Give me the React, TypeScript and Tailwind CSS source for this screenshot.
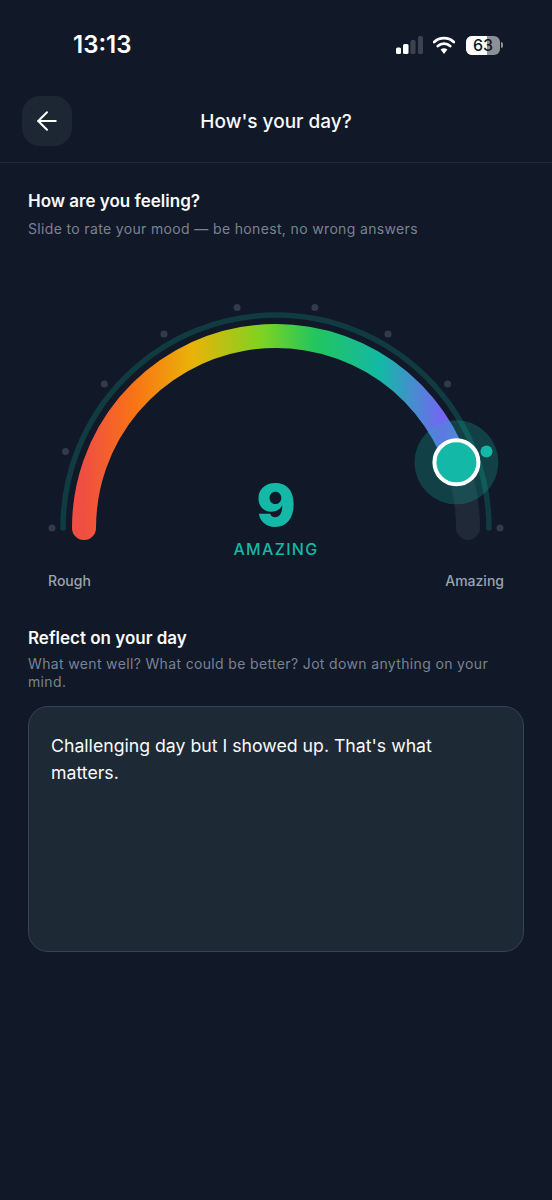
import React from "react";
import { ArrowLeft } from "lucide-react";

const CX = 276;
const CY = 240;
const R = 192;

function pt(r: number, deg: number) {
  const a = (deg * Math.PI) / 180;
  return [CX - r * Math.cos(a), CY - r * Math.sin(a)];
}

function arc(r: number, from: number, to: number) {
  const [x1, y1] = pt(r, from);
  const [x2, y2] = pt(r, to);
  return `M ${x1} ${y1} A ${r} ${r} 0 0 1 ${x2} ${y2}`;
}

const dots = [0, 20, 40, 60, 80, 100, 120, 140, 160, 180];

function Gauge() {
  const [tx, ty] = pt(R, 160);
  return (
    <svg width="552" height="270" viewBox="0 0 552 270" className="block">
      <defs>
        <linearGradient id="mood" gradientUnits="userSpaceOnUse" x1="84" y1="0" x2="470" y2="0">
          <stop offset="0" stopColor="#ef4f42" />
          <stop offset="0.13" stopColor="#f97316" />
          <stop offset="0.28" stopColor="#eab308" />
          <stop offset="0.46" stopColor="#7ed321" />
          <stop offset="0.6" stopColor="#22c55e" />
          <stop offset="0.77" stopColor="#14b8a6" />
          <stop offset="0.93" stopColor="#7565f6" />
          <stop offset="1" stopColor="#5a86e0" />
        </linearGradient>
      </defs>
      <path d={arc(213, 0, 180)} fill="none" stroke="#103c41" strokeWidth="5.5" strokeLinecap="round" />
      <path d={arc(R, 0, 180)} fill="none" stroke="#1f2937" strokeWidth="24" strokeLinecap="round" />
      {dots.map((d) => {
        const [x, y] = pt(224, d);
        return d === 160 ? null : <circle key={d} cx={x} cy={y} r="3.5" fill="#343b48" />;
      })}
      <path d={arc(R, 0, 160)} fill="none" stroke="url(#mood)" strokeWidth="24" strokeLinecap="round" />
      <circle cx={tx} cy={ty} r="42" fill="#14b8a6" fillOpacity="0.25" />
      <circle cx={pt(224, 160)[0]} cy={pt(224, 160)[1]} r="6" fill="#14b8a6" />
      <circle cx={tx} cy={ty} r="22" fill="#14b8a6" stroke="#ffffff" strokeWidth="4" />
    </svg>
  );
}

export default function App() {
  return (
    <div className="w-[552px] h-[1200px] bg-[#111827] text-white font-['Inter',sans-serif] overflow-hidden">
      <div className="h-[90px] flex items-start justify-between pt-[30px] pl-[73px] pr-[49px]">
        <span className="text-[24px] leading-[30px] font-semibold">13:13</span>
        <div className="flex items-center h-[30px]">
          <svg width="27" height="18" viewBox="0 0 27 18" className="mr-[10px]">
            <rect x="0" y="11.5" width="5" height="6.5" rx="1.5" fill="#fff" />
            <rect x="7" y="8" width="5.5" height="10" rx="1.5" fill="#fff" />
            <rect x="14.5" y="4" width="5" height="14" rx="1.5" fill="#3c4350" />
            <rect x="22" y="0" width="5" height="18" rx="1.5" fill="#3c4350" />
          </svg>
          <svg width="22" height="18" viewBox="0 0 22 18" className="mr-[11px]">
            <path d="M1.2 6 A14.5 14.5 0 0 1 20.8 6" fill="none" stroke="#fff" strokeWidth="2.8" strokeLinecap="round" />
            <path d="M4.8 10 A9.5 9.5 0 0 1 17.2 10" fill="none" stroke="#fff" strokeWidth="2.8" strokeLinecap="round" />
            <path d="M11 18 L7.6 13.6 A5.2 5.2 0 0 1 14.4 13.6 Z" fill="#fff" />
          </svg>
          <div className="relative w-[34px] h-[19px] rounded-[6px] overflow-hidden bg-[#8e9097] flex items-center justify-center">
            <div className="absolute left-0 top-0 bottom-0 w-[21px] bg-white" />
            <span className="relative text-[16px] leading-none font-medium text-[#111827]">63</span>
          </div>
          <div className="w-[2px] h-[6px] ml-[1px] rounded-r-sm bg-[#8e9097]" />
        </div>
      </div>
      <div className="h-[73px] border-b border-[#222a37] relative flex items-start justify-center">
        <button className="absolute left-[22px] top-[6px] w-[50px] h-[50px] rounded-[18px] bg-[#1c2733] flex items-center justify-center">
          <ArrowLeft size={30} strokeWidth={1.6} color="#fff" />
        </button>
        <h1 className="mt-[19px] text-[19px] leading-[26px] font-medium text-[#f9fafb]">How's your day?</h1>
      </div>
      <div className="px-[28px] pt-[26px]">
        <h2 className="text-[17px] leading-[24px] font-semibold text-[#f9fafb]">How are you feeling?</h2>
        <p className="mt-[6px] text-[14px] leading-[20px] text-[#7b8291] tracking-[0.35px]">Slide to rate your mood — be honest, no wrong answers</p>
      </div>
      <div className="relative mt-[49px]">
        <Gauge />
        <div className="absolute left-0 right-0 top-[185px] flex flex-col items-center">
          <span className="text-[58px] leading-[64px] font-black text-[#14b8a6]">9</span>
          <span className="mt-[2px] text-[16px] leading-[20px] font-medium tracking-[1.3px] text-[#14b8a6]">AMAZING</span>
        </div>
      </div>
      <div className="flex justify-between pl-[48px] pr-[48px] mt-[13px]">
        <span className="text-[14px] leading-[20px] font-medium text-[#9ca3af]">Rough</span>
        <span className="text-[14px] leading-[20px] font-medium text-[#9ca3af]">Amazing</span>
      </div>
      <div className="px-[28px] pt-[35px]">
        <h2 className="text-[17px] leading-[24px] font-semibold text-[#f9fafb]">Reflect on your day</h2>
        <p className="mt-[5px] text-[14px] leading-[18px] text-[#7b8291] tracking-[0.35px]">What went well? What could be better? Jot down anything on your mind.</p>
        <div className="mt-[15px] h-[246px] rounded-[20px] bg-[#1e2936] border border-[#364354] px-[22px] pt-[25px] text-[17.7px] leading-[27px] text-[#f9fafb]">
          Challenging day but I showed up. That's what matters.
        </div>
      </div>
    </div>
  );
}
